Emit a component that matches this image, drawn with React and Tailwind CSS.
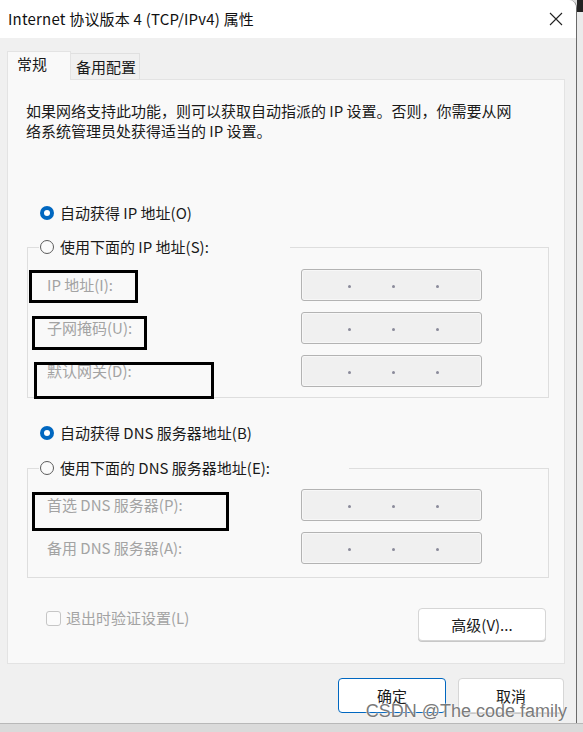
import React from "react";

const F = { fontFamily: '"Noto Sans CJK SC", "Noto Sans", sans-serif' };

function RadioOn() {
  return (
    <span className="flex h-[14px] w-[14px] shrink-0 items-center justify-center rounded-full bg-[#0067c0]">
      <span className="h-[6px] w-[6px] rounded-full bg-white" />
    </span>
  );
}
function RadioOff() {
  return <span className="h-[14px] w-[14px] shrink-0 rounded-full border border-[#5c5c5c] bg-[#fbfbfb]" />;
}

function IpBox() {
  return (
    <div className="flex h-[32px] w-[181px] items-center gap-[41px] rounded-[3px] border border-[#b3b3b3] bg-[#f0f0f0] pl-[46px] pt-[2px] shadow-[inset_0_0_0_1px_#f7f7f7]">
      <span className="h-[3px] w-[3px] rounded-full bg-[#8a8a9a]" />
      <span className="h-[3px] w-[3px] rounded-full bg-[#8a8a9a]" />
      <span className="h-[3px] w-[3px] rounded-full bg-[#8a8a9a]" />
    </div>
  );
}

function Row({ label }) {
  return (
    <div className="flex h-[32px] items-center">
      <span className="w-[254px] text-[15px] leading-[20px] text-[#a3a3a3]">{label}</span>
      <IpBox />
    </div>
  );
}

function Group({ legend, legendW, children, pt, gap, pb }) {
  return (
    <fieldset className="w-[522px] border border-[#dedede] px-0">
      <legend className={`ml-[11px] ${legendW} pl-[1px]`}>
        <span className="flex h-[20px] items-center gap-[6px] text-[15px] leading-[20px] text-[#1a1a1a]">
          <RadioOff />
          {legend}
        </span>
      </legend>
      <div className={`flex flex-col pl-[19px] ${pt} ${gap} ${pb}`}>{children}</div>
    </fieldset>
  );
}

export default function App() {
  return (
    <div className="relative flex h-[732px] w-[583px] flex-col overflow-hidden bg-[#dcdcdc]" style={F}>
      <div className="flex h-[723px]">
        {/* window */}
        <div className="flex w-[577px] flex-col overflow-hidden rounded-tr-[8px] border-r border-[#6a6a6a] bg-[#f0f0f0]">
          {/* title */}
          <div className="flex h-[38px] items-center justify-between bg-white pl-[8px] pr-[13px]">
            <span className="text-[15px] leading-[20px] tracking-[0.2px] text-[#111]">Internet 协议版本 4 (TCP/IPv4) 属性</span>
            <svg width="14" height="14" viewBox="0 0 14 14">
              <path d="M1 1 L13 13 M13 1 L1 13" stroke="#222" strokeWidth="1.1" fill="none" />
            </svg>
          </div>
          {/* body */}
          <div className="flex flex-1 flex-col pl-[7px] pr-[11px] pt-[13px]">
            {/* tabs */}
            <div className="flex h-[28px] items-end">
              <div className="relative z-10 -mb-px flex h-[29px] w-[64px] items-center border border-b-0 border-[#e3e3e3] bg-[#f9f9f9] pb-[4px] pl-[9px] text-[15px] leading-[20px] text-[#1a1a1a]">
                常规
              </div>
              <div className="flex h-[26px] w-[69px] items-center border border-b-0 border-l-0 border-[#e0e0e0] bg-[#f0f0f0] pl-[5px] text-[15px] leading-[20px] text-[#1a1a1a]">
                备用配置
              </div>
            </div>
            {/* panel */}
            <div className="flex h-[585px] w-[558px] flex-col border border-[#e3e3e3] bg-[#f9f9f9] pl-[19px] pt-[21px]">
              <p className="-ml-[1px] text-[15px] leading-[20px] text-[#1a1a1a]">
                如果网络支持此功能，则可以获取自动指派的 IP 设置。否则，你需要从网
                <br />
                络系统管理员处获得适当的 IP 设置。
              </p>

              <div className="ml-[13px] mt-[62px] flex h-[20px] items-center gap-[6px] text-[15px] leading-[20px] text-[#1a1a1a]">
                <RadioOn />
                自动获得 IP 地址(O)
              </div>

              <div className="mt-[14px]">
                <Group legend="使用下面的 IP 地址(S):" legendW="w-[251px]" pt="pt-[12px]" gap="gap-[11px]" pb="pb-[10px]">
                  <Row label="IP 地址(I):" />
                  <Row label="子网掩码(U):" />
                  <Row label="默认网关(D):" />
                </Group>
              </div>

              <div className="ml-[13px] mt-[25px] flex h-[20px] items-center gap-[6px] text-[15px] leading-[20px] text-[#1a1a1a]">
                <RadioOn />
                自动获得 DNS 服务器地址(B)
              </div>

              <div className="mt-[15px]">
                <Group legend="使用下面的 DNS 服务器地址(E):" legendW="w-[310px]" pt="pt-[11px]" gap="gap-[11px]" pb="pb-[13px]">
                  <Row label="首选 DNS 服务器(P):" />
                  <Row label="备用 DNS 服务器(A):" />
                </Group>
              </div>

              <div className="mt-[30px] flex w-[519px] items-start justify-between">
                <div className="ml-[19px] flex h-[20px] items-center gap-[5px] text-[15px] leading-[20px] text-[#a3a3a3]">
                  <span className="h-[15px] w-[15px] rounded-[3px] border border-[#c6c6c6] bg-[#fbfbfb]" />
                  退出时验证设置(L)
                </div>
                <button className="flex h-[33px] w-[128px] items-center justify-center rounded-[4px] border border-[#d6d6d6] bg-white text-[15px] leading-[20px] text-[#1a1a1a] shadow-[0_1px_0_#c8c8c8]">
                  高级(V)...
                </button>
              </div>
            </div>
            {/* bottom buttons */}
            <div className="mt-[14px] flex justify-end gap-[12px] pr-[1px]">
              <button className="flex h-[35px] w-[108px] items-center justify-center rounded-[4px] border border-[#0067c0] bg-white text-[15px] leading-[20px] text-[#1a1a1a]">
                确定
              </button>
              <button className="flex h-[35px] w-[106px] items-center justify-center rounded-[4px] border border-[#d6d6d6] bg-white text-[15px] leading-[20px] text-[#1a1a1a] shadow-[0_1px_0_#c8c8c8]">
                取消
              </button>
            </div>
          </div>
        </div>
        {/* right edge of background */}
        <div className="flex flex-1 flex-col bg-[#ebebeb]">
          <div className="h-[12px] bg-[#222]" />
        </div>
      </div>
      {/* taskbar strip */}
      <div className="h-[9px] border-t border-[#b8b8b8] bg-[#dadada]" />

      {/* annotation boxes */}
      <div className="absolute left-[29px] top-[270px] h-[33px] w-[109px] border-[3px] border-black" />
      <div className="absolute left-[32px] top-[316px] h-[34px] w-[115px] border-[3px] border-black" />
      <div className="absolute left-[34px] top-[362px] h-[37px] w-[180px] border-[3px] border-black" />
      <div className="absolute left-[32px] top-[492px] h-[39px] w-[197px] border-[3px] border-black" />

      {/* watermark */}
      <div
        className="absolute right-[16px] top-[700px] text-[18px] leading-[22px] text-[#7a7a7a] [text-shadow:0_0_2px_#ffffff,0_0_1px_#ffffff]"
        style={{ fontFamily: '"Liberation Sans", Arial, sans-serif' }}
      >
        CSDN @The code family
      </div>
    </div>
  );
}
